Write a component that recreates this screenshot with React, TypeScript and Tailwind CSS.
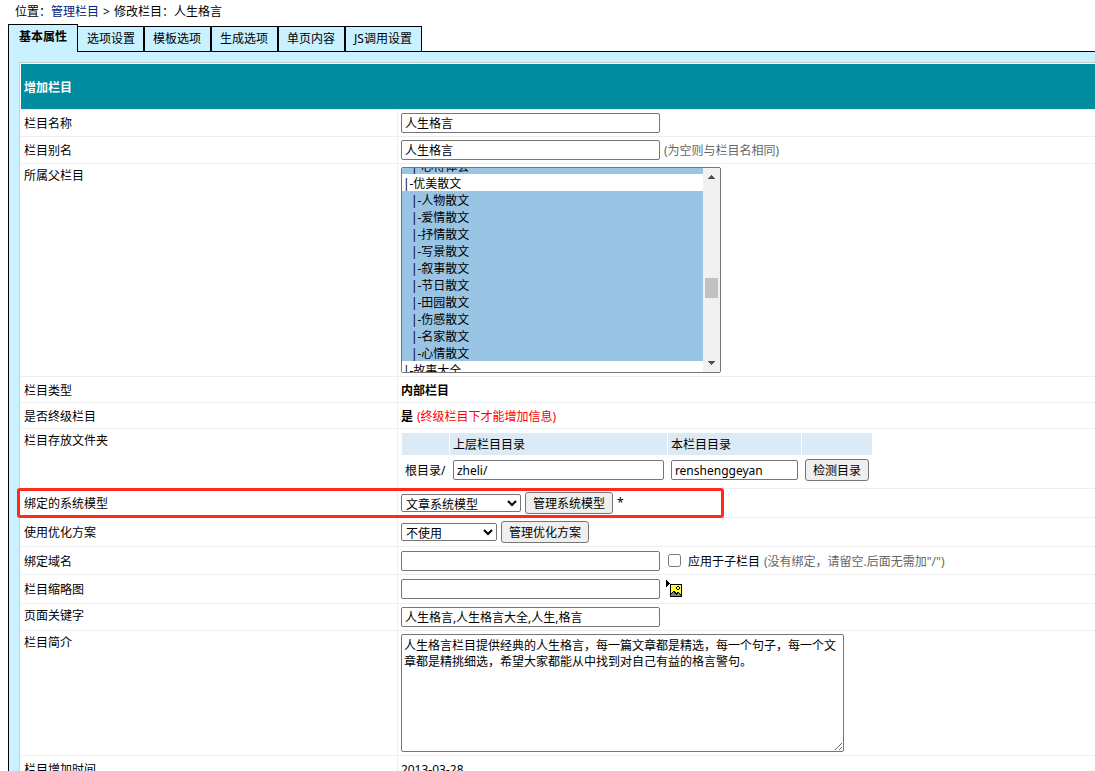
import { useEffect, useRef, type ReactNode } from "react";

const TABS = ["选项设置", "模板选项", "生成选项", "单页内容", "JS调用设置"];

const PARENTS = [
  { name: "心得体会", child: true },
  { name: "优美散文", child: false },
  { name: "人物散文", child: true },
  { name: "爱情散文", child: true },
  { name: "抒情散文", child: true },
  { name: "写景散文", child: true },
  { name: "叙事散文", child: true },
  { name: "节日散文", child: true },
  { name: "田园散文", child: true },
  { name: "伤感散文", child: true },
  { name: "名家散文", child: true },
  { name: "心情散文", child: true },
  { name: "故事大全", child: false },
  { name: "爱情故事", child: true },
];

const inputClass = "h-5 rounded-[2px] border border-[#767676] bg-white px-[3px]";
const selectClass = "h-[18px] rounded-[2px] border border-[#767676] bg-white";
const buttonClass = "h-[22px] rounded-[3px] border border-[#767676] bg-[#efefef] px-[7px] pt-px";

type RowProps = {
  label: string;
  htmlFor?: string;
  height: string;
  top?: boolean;
  highlight?: boolean;
  children: ReactNode;
};

function Row({ label, htmlFor, height, top, highlight, children }: RowProps) {
  return (
    <div className={`relative flex border-b border-[#eeeeee] ${height}`}>
      <div className={`flex w-[35%] shrink-0 px-[3px] ${top ? "items-start pt-1" : "items-center pt-[2px]"}`}>
        {htmlFor ? <label htmlFor={htmlFor}>{label}</label> : label}
      </div>
      <div className={`flex flex-1 gap-1 border-l border-[#eeeeee] px-[3px] ${top ? "items-start pt-[3px]" : "items-center"}`}>
        {children}
      </div>
      {highlight && (
        <div className="pointer-events-none absolute -inset-y-px -left-1 w-[707px] rounded-[3px] border-[3px] border-[#ff2a1c]" />
      )}
    </div>
  );
}

function ParentSelect() {
  const ref = useRef<HTMLSelectElement>(null);

  useEffect(() => {
    if (ref.current) ref.current.scrollTop = 11;
  }, []);

  return (
    <div className="flex h-[206px] w-80 overflow-hidden rounded-[2px] border border-[#767676] bg-white">
      <select
        id="parent"
        ref={ref}
        multiple
        className="h-full min-w-0 flex-1 overflow-y-scroll p-0 outline-none [scrollbar-width:none]"
      >
        {PARENTS.map((p) => (
          <option
            key={p.name}
            className={`h-[17px] min-h-0 py-0 pr-0 leading-[15px] ${p.child ? "bg-[#99c4e4] pl-[9px]" : "bg-white pl-px"}`}
          >
            |-{p.name}
          </option>
        ))}
      </select>
      <div className="flex w-[17px] flex-col items-center bg-[#f1f1f1] py-[7px]">
        <svg width="7" height="4" viewBox="0 0 7 4" fill="#505050" shapeRendering="crispEdges">
          <path d="M3 0h1v1h1v1h1v1h1v1H0V3h1V2h1V1h1Z" />
        </svg>
        <div className="mt-[99px] h-5 w-[13px] bg-[#c1c1c1]" />
        <svg className="mt-auto" width="7" height="4" viewBox="0 0 7 4" fill="#505050" shapeRendering="crispEdges">
          <path d="M0 0h7v1H6v1H5v1H4v1H3V3H2V2H1V1H0Z" />
        </svg>
      </div>
    </div>
  );
}

function PictureIcon() {
  return (
    <svg width="17" height="18" viewBox="0 0 17 18" shapeRendering="crispEdges">
      <path d="M0 0h1v1h1v1h1v1h1v1h-1v1h-1v1h-1v1h-1Z" fill="#000" />
      <rect x="4" y="4" width="12" height="13" fill="#000" />
      <rect x="5" y="5" width="10" height="11" fill="#ffff33" />
      <path d="M5 16v-3h1v-1h1v-1h2v1h1v1h1v1h1v-1h1v1h1v1h1v1Z" fill="#808080" />
      <path d="M5 13h1v-1h1v-1h2v1h1v1h1v-1h2v1h1v1h1v1h-1v-1h-1v-1h-1v1h-1v1h-1v-1h-1v-1h-1v-1h-1v1h-1v1h-1Z" fill="#000" />
      <path d="M11 6h2v1h1v2h-1v1h-2v-1h-1v-2h1Z" fill="#000" />
      <rect x="11" y="7" width="2" height="2" fill="#ffff99" />
    </svg>
  );
}

export default function App() {
  return (
    <div className="h-screen overflow-hidden bg-white font-['Noto_Sans','Noto_Sans_CJK_SC',sans-serif] text-xs leading-4 text-black">
      <nav className="pt-1 pl-[15px]">
        位置：
        <a href="#columns" className="text-[#002280]">管理栏目</a>
        <span className="px-1">&gt;</span>
        修改栏目：人生格言
      </nav>

      <div className="mt-1 flex items-end pl-2">
        <button className="h-7 border border-b-0 border-black bg-[#c9f1ff] px-[10px] pb-1 font-bold">基本属性</button>
        {TABS.map((tab) => (
          <button key={tab} className="h-[26px] border border-black bg-[#c9f1ff] px-2 nth-2:border-l-0 nth-2:pl-[9px] not-nth-2:pr-[9px]">
            {tab}
          </button>
        ))}
        <div className="flex-1 border-b border-black" />
      </div>

      <div className="ml-2 border-l border-black bg-[#c9f1ff] pt-[10px] pl-[10px]">
        <form className="border-t border-l border-[#cccccc] bg-white pt-px pl-px">
          <h1 className="flex h-[45px] items-center bg-[#008c9e] px-[3px] pt-[2px] font-bold text-white">增加栏目</h1>
          <div className="border-t border-[#eeeeee]">
            <Row label="栏目名称" htmlFor="name" height="h-[27px]">
              <input id="name" className={`${inputClass} w-[259px]`} defaultValue="人生格言" />
            </Row>
            <Row label="栏目别名" htmlFor="alias" height="h-[27px]">
              <input id="alias" className={`${inputClass} w-[259px]`} defaultValue="人生格言" />
              <span className="pt-[2px] text-[#666666]">(为空则与栏目名相同)</span>
            </Row>
            <Row label="所属父栏目" htmlFor="parent" height="h-[213px]" top>
              <ParentSelect />
            </Row>
            <Row label="栏目类型" height="h-[26px]">
              <strong className="pt-[2px]">内部栏目</strong>
            </Row>
            <Row label="是否终级栏目" height="h-[26px]">
              <strong className="pt-[2px]">是</strong>
              <span className="pt-[2px] text-[#ff0000]">(终级栏目下才能增加信息)</span>
            </Row>
            <Row label="栏目存放文件夹" height="h-[60px]" top>
              <table className="w-[472px] table-fixed border-separate border-spacing-px">
                <thead>
                  <tr className="h-[22px] bg-[#dbeaf5] text-left">
                    <th className="w-[47px]" />
                    <th className="w-[217px] px-[3px] pt-[2px] font-normal">上层栏目目录</th>
                    <th className="w-[133px] px-[3px] pt-[2px] font-normal">本栏目目录</th>
                    <th />
                  </tr>
                </thead>
                <tbody>
                  <tr className="h-7">
                    <td className="pt-[2px] pl-[3px] whitespace-nowrap">根目录/</td>
                    <td className="px-[3px]">
                      <input aria-label="上层栏目目录" className={`${inputClass} w-full`} defaultValue="zheli/" />
                    </td>
                    <td className="px-[3px]">
                      <input aria-label="本栏目目录" className={`${inputClass} w-full`} defaultValue="renshenggeyan" />
                    </td>
                    <td className="px-[3px]">
                      <button type="button" className={buttonClass}>检测目录</button>
                    </td>
                  </tr>
                </tbody>
              </table>
            </Row>
            <Row label="绑定的系统模型" htmlFor="model" height="h-[29px]" highlight>
              <select id="model" className={`${selectClass} w-[120px]`}>
                <option>文章系统模型</option>
              </select>
              <button type="button" className={buttonClass}>管理系统模型</button>
              <span>*</span>
            </Row>
            <Row label="使用优化方案" htmlFor="plan" height="h-[29px]">
              <select id="plan" className={`${selectClass} w-24`}>
                <option>不使用</option>
              </select>
              <button type="button" className={buttonClass}>管理优化方案</button>
            </Row>
            <Row label="绑定域名" htmlFor="domain" height="h-7">
              <input id="domain" className={`${inputClass} w-[259px]`} />
              <label className="flex items-center gap-[7px] pl-1">
                <input type="checkbox" className="size-[13px]" />
                <span className="pt-[2px]">应用于子栏目</span>
              </label>
              <span className="pt-[2px] text-[#666666]">(没有绑定，请留空.后面无需加"/")</span>
            </Row>
            <Row label="栏目缩略图" htmlFor="thumb" height="h-[29px]">
              <input id="thumb" className={`${inputClass} w-[259px]`} />
              <a href="#upload" aria-label="选择图片" className="pl-[2px]">
                <PictureIcon />
              </a>
            </Row>
            <Row label="页面关键字" htmlFor="keywords" height="h-[27px]" top>
              <input id="keywords" className={`${inputClass} w-[259px]`} defaultValue="人生格言,人生格言大全,人生,格言" />
            </Row>
            <Row label="栏目简介" htmlFor="intro" height="h-[125px]" top>
              <textarea
                id="intro"
                className="h-[118px] w-[443px] resize rounded-[2px] border border-[#767676] bg-white px-[2px] pt-[3px]"
                defaultValue="人生格言栏目提供经典的人生格言，每一篇文章都是精选，每一个句子，每一个文章都是精挑细选，希望大家都能从中找到对自己有益的格言警句。"
              />
            </Row>
            <Row label="栏目增加时间" height="h-[26px]">
              <span className="pt-[2px]">2013-03-28</span>
            </Row>
          </div>
        </form>
      </div>
    </div>
  );
}
